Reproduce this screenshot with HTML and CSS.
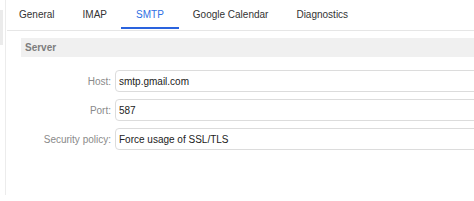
FILE: index.html
```html
<!DOCTYPE html>
<html lang="en">
<head>
    <meta charset="UTF-8">
    <meta name="viewport" content="width=device-width, initial-scale=1.0">
    <title>Account settings</title>
    <link rel="stylesheet" href="styles.css">
</head>
<body>
    <div class="rail">
        <div class="rail-mark"></div>
    </div>
    <div class="main">
        <div class="tabs">
            <div class="tab">General</div>
            <div class="tab">IMAP</div>
            <div class="tab active">SMTP</div>
            <div class="tab">Google Calendar</div>
            <div class="tab">Diagnostics</div>
        </div>

        <div class="section">Server</div>

        <div class="form">
            <label class="label" for="host">Host:</label>
            <input class="field" id="host" type="text" value="smtp.gmail.com">

            <label class="label" for="port">Port:</label>
            <input class="field" id="port" type="text" value="587">

            <label class="label" for="security">Security policy:</label>
            <input class="field" id="security" type="text" value="Force usage of SSL/TLS">
        </div>
    </div>
</body>
</html>
```

FILE: styles.css
```css
body {
    font-family: "Liberation Sans", Arial, sans-serif;
    font-size: 10px;
    background: #ffffff;
    color: #2b2b2b;
    margin: 0;
    display: flex;
    height: 201px;
    overflow: hidden;
}

.rail {
    width: 5px;
    height: 195px;
    border-right: 1px solid #ececec;
    flex-shrink: 0;
}

.rail-mark {
    width: 3px;
    height: 35px;
    margin-top: 10px;
    background-color: #ebebeb;
}

.main {
    flex: 1;
    min-width: 0;
    overflow: hidden;
}

.tabs {
    display: flex;
    height: 30px;
    margin-left: 1px;
    border-bottom: 1px solid #e6e6e6;
}

.tab {
    padding: 0 14px;
    line-height: 29px;
    height: 29px;
    box-sizing: border-box;
    color: #333333;
    border-bottom: 2px solid transparent;
}

.tab:first-child {
    padding-left: 12px;
}

.tab.active {
    padding: 0 15px;
    color: #2f6fe4;
    border-bottom-color: #2a63de;
}

.section {
    margin: 7px 0 13px 15px;
    height: 19px;
    line-height: 19px;
    padding-left: 4px;
    background-color: #f0f0f0;
    color: #7d7d7d;
    font-weight: bold;
}

.form {
    display: grid;
    grid-template-columns: 105px 1fr;
    column-gap: 4px;
    row-gap: 7px;
    align-items: center;
}

.label {
    text-align: right;
    color: #8a8a8a;
}

.field {
    width: calc(100% + 20px);
    height: 22px;
    box-sizing: border-box;
    margin: 0;
    padding: 0 3px;
    font-family: inherit;
    font-size: 10px;
    color: #222222;
    border: 1px solid #dcdcdc;
    border-radius: 4px;
    outline: none;
}
```
